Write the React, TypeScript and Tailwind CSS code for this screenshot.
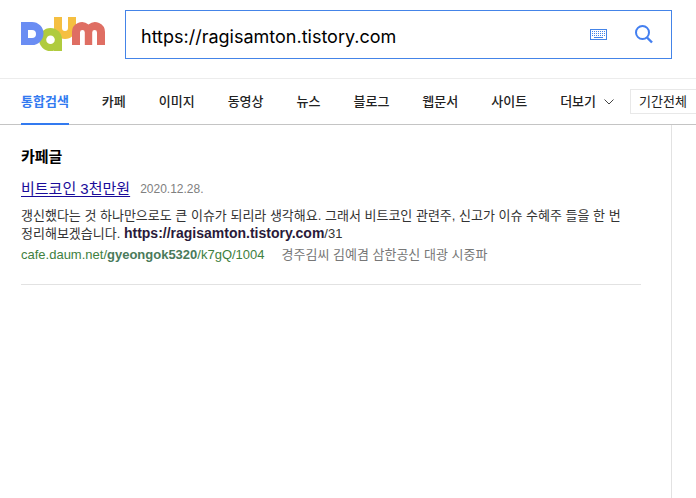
import React from 'react';

const tabs = ['통합검색', '카페', '이미지', '동영상', '뉴스', '블로그', '웹문서', '사이트'];

const Logo: React.FC = () => {
  return (
    <svg width="84" height="36" viewBox="0 0 84 36" aria-hidden="true">
      <path d="M33 0h8v11a3 3 0 0 0 6 0V0h8v11a11 11 0 0 1-22 0z" fill="#f5bf41" />
      <circle cx="29.500" cy="22.500" r="11.500" fill="#b0cb3e" />
      <path d="M33 22h8v12h-8z" fill="#b0cb3e" />
      <circle cx="29.500" cy="22.700" r="4.300" fill="#fff" />
      <path d="M0 5h11a11.500 11.500 0 0 1 0 23H0z" fill="#6a8df3" />
      <path d="M7 13h4a4 4 0 0 1 0 8H7z" fill="#fff" />
      <path d="M51 28V15a10 10 0 0 1 16.500-7.500A10 10 0 0 1 84 15v13h-8V15.500a2.400 2.400 0 0 0-4.800 0V28h-7.400V15.500a2.400 2.400 0 0 0-4.800 0V28z" fill="#df6e63" />
    </svg>
  );
};

const KeyboardIcon: React.FC = () => {
  return (
    <svg width="17" height="11" viewBox="0 0 17 11" fill="none" stroke="#4484e8" shapeRendering="crispEdges" aria-hidden="true">
      <rect x="0.500" y="0.500" width="16" height="10" />
      <path d="M2 2.500h14M2 4.500h14M2 6.500h14" strokeDasharray="1 1" />
      <path d="M4 8.500h9" />
    </svg>
  );
};

const SearchIcon: React.FC = () => {
  return (
    <svg width="18" height="19" viewBox="0 0 18 19" fill="none" stroke="#437ff0" strokeWidth="2" aria-hidden="true">
      <circle cx="7.500" cy="7.500" r="6.500" />
      <path d="M12 12.500l5 5" strokeWidth="2.400" />
    </svg>
  );
};

const SearchHeader: React.FC = () => {
  return (
    <header className="flex items-start gap-5 border-b border-[#ececec] pl-[21px] pr-6 pt-[10px] pb-[19px]">
      <a href="#" aria-label="Daum" className="mt-[7px] shrink-0">
        <Logo />
      </a>
      <form className="flex h-[49px] flex-1 items-center border border-[#4484e8] pl-[15px] pr-[18px]">
        <input
          type="text"
          aria-label="검색어"
          defaultValue="https://ragisamton.tistory.com"
          className="min-w-0 flex-1 pt-1 font-['Inter','Noto_Sans_CJK_KR',sans-serif] text-lg text-black outline-none"
        />
        <button type="button" aria-label="키보드" className="mr-7">
          <KeyboardIcon />
        </button>
        <button type="button" aria-label="검색">
          <SearchIcon />
        </button>
      </form>
    </header>
  );
};

const TabBar: React.FC = () => {
  return (
    <nav className="flex h-[46px] items-stretch whitespace-nowrap border-b border-[#c4c4c4] pl-[21px] text-[13px] font-medium text-[#222]">
      <div className="-mb-px flex shrink-0 gap-[33px]">
        {tabs.map((tab, i) => (
          <a
            key={tab}
            href="#"
            className={i === 0 ? 'flex items-center border-b-2 border-[#327af0] pt-px font-bold text-[#327af0]' : 'flex items-center border-b-2 border-transparent pt-px'}
          >
            {tab}
          </a>
        ))}
        <button type="button" className="flex items-center gap-2 border-b-2 border-transparent pt-px">
          더보기
          <svg width="10" height="6" viewBox="0 0 10 6" fill="none" stroke="#444" aria-hidden="true">
            <path d="M0.500 0.500l4.500 4.500 4.500-4.500" />
          </svg>
        </button>
      </div>
      <button type="button" className="ml-4 h-[25px] w-24 shrink-0 self-center border border-[#e8e8e8] pl-2 text-left font-normal">
        기간전체
      </button>
    </nav>
  );
};

const CafeResults: React.FC = () => {
  return (
    <section className="border-b border-[#e2e2e2] pb-5 pt-[22px]">
      <h2 className="text-[15px] leading-5 font-bold text-black">카페글</h2>
      <article className="mt-3 text-[13px] leading-[18px] text-[#333]">
        <div className="flex items-center gap-[10px] leading-5">
          <a href="#" className="text-[15px] text-[#1a0b9a] underline underline-offset-2">
            비트코인 3천만원
          </a>
          <span className="font-['Liberation_Sans',sans-serif] text-xs text-[#808080]">2020.12.28.</span>
        </div>
        <p className="mt-2 break-keep">
          갱신했다는 것 하나만으로도 큰 이슈가 되리라 생각해요. 그래서 비트코인 관련주, 신고가 이슈 수혜주 들을 한 번 정리해보겠습니다.{' '}
          <b className="text-sm leading-none text-[#2a1a3a]">https://ragisamton.tistory.com</b>/31
        </p>
        <div className="mt-[3px] flex gap-[17px]">
          <a href="#" className="text-[#408040]">
            cafe.daum.net/<b className="text-[#4a7a5a]">gyeongok5320</b>/k7gQ/1004
          </a>
          <a href="#" className="text-[#777]">경주김씨 김예겸 삼한공신 대광 시중파</a>
        </div>
      </article>
    </section>
  );
};

const App: React.FC = () => {
  return (
    <div className="flex min-h-screen flex-col overflow-x-hidden bg-white font-['Liberation_Sans','Noto_Sans_CJK_KR',sans-serif]">
      <SearchHeader />
      <TabBar />
      <div className="flex flex-1">
        <main className="flex-1 border-r border-[#e2e2e2] pl-[21px] pr-[30px]">
          <CafeResults />
        </main>
        <aside className="w-6 shrink-0" />
      </div>
    </div>
  );
};

export default App;
